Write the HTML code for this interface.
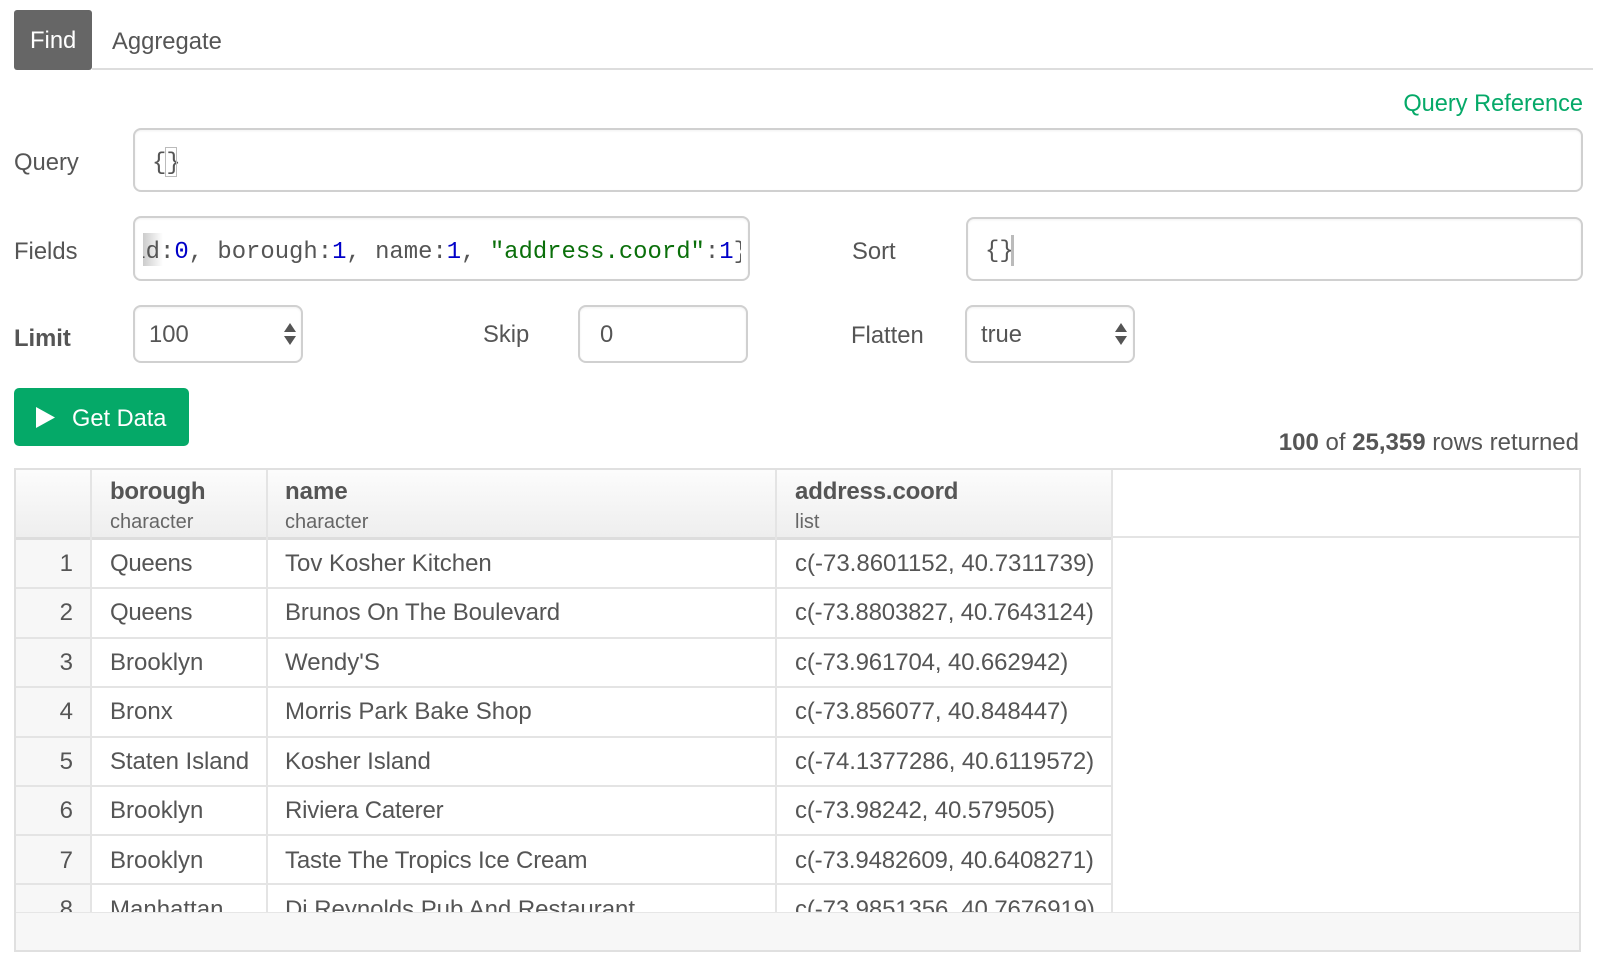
<!DOCTYPE html>
<html><head><meta charset="utf-8"><style>
html,body{margin:0;padding:0;background:#fff;width:1600px;height:976px;overflow:hidden}
body{position:relative;font-family:"Liberation Sans",sans-serif;color:#555;font-size:23.8px}
.a{position:absolute}
.t{position:absolute;line-height:30px;white-space:nowrap}
.box{position:absolute;box-sizing:border-box;border:2px solid #d0d0d0;border-radius:8px;background:#fff;box-shadow:inset 0 1px 2px rgba(0,0,0,.06)}
.m{position:absolute;font-family:"Liberation Mono",monospace;font-size:23.9px;line-height:30px;white-space:pre;color:#555}
.n{color:#0000c8}.s{color:#0a6f0a}
b{font-weight:700}
.l{position:absolute;background:#e4e4e4}
.sub{font-size:20px;color:#666}
.clip{position:absolute;left:0;top:540px;width:1600px;height:372px;overflow:hidden;font-size:24px}
.h{font-size:24px;font-weight:700}
</style></head><body>
<div class="a" style="left:92px;top:68px;width:1501px;height:2px;background:#ddd"></div>
<div class="a" style="left:14px;top:10px;width:78px;height:60px;background:#666;border-radius:3px"></div>
<div class="t" style="left:30px;top:26px;color:#fff">Find</div>
<div class="t" style="left:112px;top:27px">Aggregate</div>
<div class="t" style="right:17px;top:89px;color:#05a968;font-size:23.6px">Query Reference</div>

<div class="t" style="left:14px;top:148px">Query</div>
<div class="box" style="left:133px;top:128px;width:1450px;height:64px"></div>
<div class="m" style="left:152px;top:149px">{}</div>
<div class="a" style="left:165px;top:147px;width:12px;height:30px;box-sizing:border-box;border:1px solid #bbb"></div>

<div class="t" style="left:14px;top:237px">Fields</div>
<div class="box" style="left:133px;top:216px;width:617px;height:65px"></div>
<div class="a" style="left:143px;top:233px;width:20px;height:33px;background:linear-gradient(90deg,#ccc,rgba(255,255,255,0))"></div>
<div class="a" style="left:143px;top:219px;width:598px;height:60px;overflow:hidden"><div class="m" style="left:-26px;top:19px">_id:<span class="n">0</span>, borough:<span class="n">1</span>, name:<span class="n">1</span>, <span class="s">"address.coord"</span>:<span class="n">1</span>}</div></div>

<div class="t" style="left:852px;top:237px">Sort</div>
<div class="box" style="left:966px;top:217px;width:617px;height:64px"></div>
<div class="m" style="left:985px;top:237px">{}</div>
<div class="a" style="left:1011px;top:235px;width:3px;height:31px;background:#bbb"></div>

<div class="t" style="left:14px;top:324px;font-weight:700">Limit</div>
<div class="box" style="left:133px;top:305px;width:170px;height:58px"></div>
<div class="t" style="left:149px;top:320px">100</div>
<svg class="a" style="left:284px;top:322px" width="14" height="26"><path d="M6 1L12 10H0Z M0 14H12L6 23Z" fill="#555"/></svg>

<div class="t" style="left:483px;top:320px">Skip</div>
<div class="box" style="left:578px;top:305px;width:170px;height:58px"></div>
<div class="t" style="left:600px;top:320px">0</div>

<div class="t" style="left:851px;top:321px">Flatten</div>
<div class="box" style="left:965px;top:305px;width:170px;height:58px"></div>
<div class="t" style="left:981px;top:320px">true</div>
<svg class="a" style="left:1115px;top:322px" width="14" height="26"><path d="M6 1L12 10H0Z M0 14H12L6 23Z" fill="#555"/></svg>

<div class="a" style="left:14px;top:388px;width:175px;height:58px;background:#05a968;border-radius:5px"></div>
<svg class="a" style="left:36px;top:407px" width="20" height="22"><path d="M0 0L19 10.5L0 21Z" fill="#fff"/></svg>
<div class="t" style="left:72px;top:404px;color:#fff;font-size:23.6px">Get Data</div>

<div class="t" style="right:21px;top:428px;font-size:24px"><b>100</b> of <b>25,359</b> rows returned</div>

<!-- grid -->
<div class="a" style="left:14px;top:468px;width:1567px;height:484px;box-sizing:border-box;border:2px solid #e0e0e0"></div>
<div class="a" style="left:16px;top:470px;width:1095px;height:67px;background:linear-gradient(#fcfcfc,#eeeeee)"></div>
<div class="a" style="left:16px;top:537px;width:1095px;height:3px;background:#ddd"></div>
<div class="l" style="left:1111px;top:536px;width:468px;height:2px"></div>
<div class="a" style="left:16px;top:540px;width:74px;height:372px;background:#f7f7f7"></div>
<div class="l" style="left:90px;top:470px;width:2px;height:442px"></div>
<div class="l" style="left:266px;top:470px;width:2px;height:442px"></div>
<div class="l" style="left:775px;top:470px;width:2px;height:442px"></div>
<div class="l" style="left:1111px;top:470px;width:2px;height:442px"></div>

<div class="t h" style="left:110px;top:477px;letter-spacing:-.29px">borough</div>
<div class="t h" style="left:285px;top:477px">name</div>
<div class="t h" style="left:795px;top:477px;letter-spacing:-.16px">address.coord</div>
<div class="t sub" style="left:110px;top:507px">character</div>
<div class="t sub" style="left:285px;top:507px">character</div>
<div class="t sub" style="left:795px;top:507px">list</div>

<div class="clip">
<div class="l" style="left:16px;top:47px;width:1097px;height:2px"></div>
<div class="l" style="left:16px;top:97px;width:1097px;height:2px"></div>
<div class="l" style="left:16px;top:146px;width:1097px;height:2px"></div>
<div class="l" style="left:16px;top:196px;width:1097px;height:2px"></div>
<div class="l" style="left:16px;top:245px;width:1097px;height:2px"></div>
<div class="l" style="left:16px;top:294px;width:1097px;height:2px"></div>
<div class="l" style="left:16px;top:343px;width:1097px;height:2px"></div>

<div class="t" style="right:1527px;top:9px">1</div><div class="t" style="left:110px;top:9px;letter-spacing:-.3px">Queens</div><div class="t" style="left:285px;top:9px">Tov Kosher Kitchen</div><div class="t" style="left:795px;top:9px">c(-73.8601152, 40.7311739)</div>
<div class="t" style="right:1527px;top:58px">2</div><div class="t" style="left:110px;top:58px;letter-spacing:-.3px">Queens</div><div class="t" style="left:285px;top:58px;letter-spacing:-.09px">Brunos On The Boulevard</div><div class="t" style="left:795px;top:58px;letter-spacing:-.16px">c(-73.8803827, 40.7643124)</div>
<div class="t" style="right:1527px;top:108px">3</div><div class="t" style="left:110px;top:108px">Brooklyn</div><div class="t" style="left:285px;top:108px">Wendy'S</div><div class="t" style="left:795px;top:108px;letter-spacing:-.13px">c(-73.961704, 40.662942)</div>
<div class="t" style="right:1527px;top:157px">4</div><div class="t" style="left:110px;top:157px">Bronx</div><div class="t" style="left:285px;top:157px">Morris Park Bake Shop</div><div class="t" style="left:795px;top:157px;letter-spacing:-.13px">c(-73.856077, 40.848447)</div>
<div class="t" style="right:1527px;top:207px">5</div><div class="t" style="left:110px;top:207px;letter-spacing:-.08px">Staten Island</div><div class="t" style="left:285px;top:207px;letter-spacing:-.08px">Kosher Island</div><div class="t" style="left:795px;top:207px;letter-spacing:-.08px">c(-74.1377286, 40.6119572)</div>
<div class="t" style="right:1527px;top:256px">6</div><div class="t" style="left:110px;top:256px">Brooklyn</div><div class="t" style="left:285px;top:256px;letter-spacing:-.2px">Riviera Caterer</div><div class="t" style="left:795px;top:256px;letter-spacing:-.13px">c(-73.98242, 40.579505)</div>
<div class="t" style="right:1527px;top:306px">7</div><div class="t" style="left:110px;top:306px">Brooklyn</div><div class="t" style="left:285px;top:306px;letter-spacing:-.15px">Taste The Tropics Ice Cream</div><div class="t" style="left:795px;top:306px;letter-spacing:-.16px">c(-73.9482609, 40.6408271)</div>
<div class="t" style="right:1527px;top:355px">8</div><div class="t" style="left:110px;top:355px">Manhattan</div><div class="t" style="left:285px;top:355px;letter-spacing:-.03px">Di Reynolds Pub And Restaurant</div><div class="t" style="left:795px;top:355px;letter-spacing:-.12px">c(-73.9851356, 40.7676919)</div>
</div>
<div class="a" style="left:16px;top:912px;width:1563px;height:38px;background:#f7f7f7;border-top:1px solid #e6e6e6;box-sizing:border-box"></div>
</body></html>
